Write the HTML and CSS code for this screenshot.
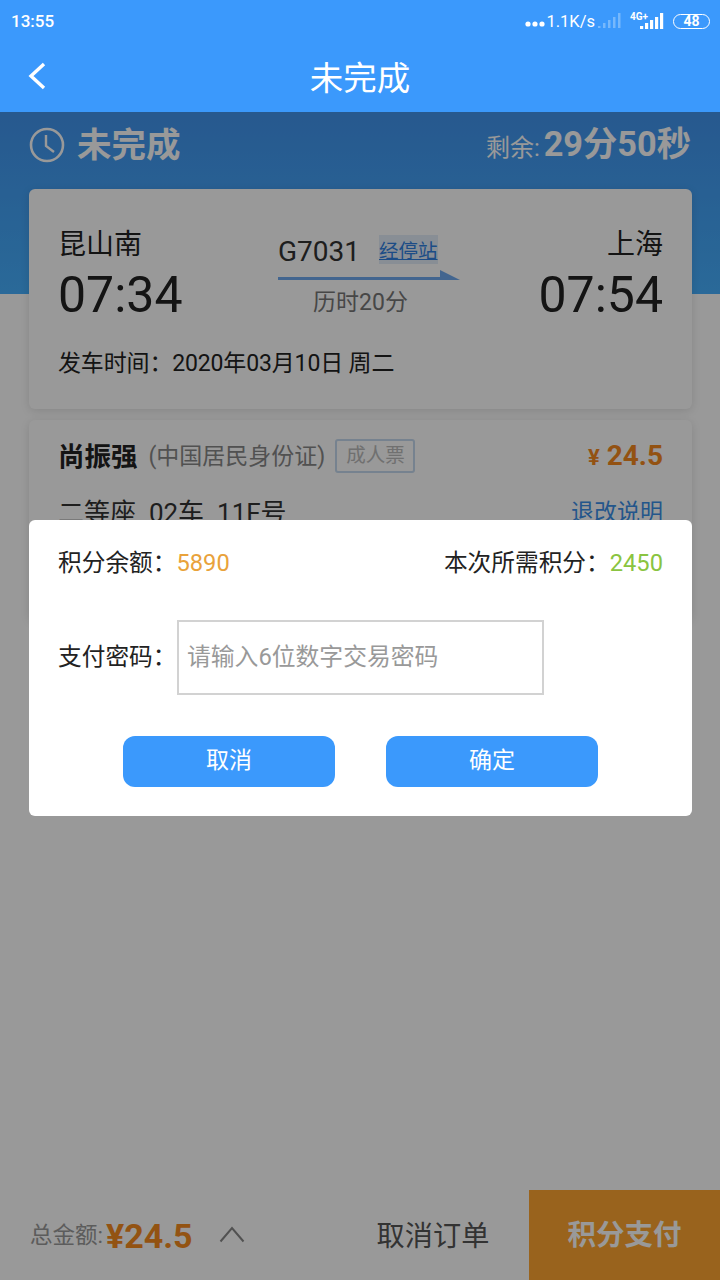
FILE: index.html
```html
<!DOCTYPE html>
<html lang="zh-CN">
<head>
    <meta charset="UTF-8">
    <meta name="viewport" content="width=device-width, initial-scale=1.0">
    <title>未完成</title>
    <link rel="stylesheet" href="styles.css">
</head>
<body>
<div class="page">
    <div class="top">
        <div class="status-bar">
            <span class="clock">13:55</span>
            <div class="status-icons">
                <svg class="dots" width="20" height="8" viewBox="0 0 20 8"><circle cx="3" cy="4" r="2.6"/><circle cx="10" cy="4" r="2.6"/><circle cx="17" cy="4" r="2.6"/></svg>
                <span class="speed">1.1K/s</span>
                <svg class="signal faint" width="24" height="16" viewBox="0 0 24 16"><rect x="0" y="13" width="2.5" height="2"/><rect x="5" y="10" width="2.5" height="5"/><rect x="10" y="7" width="2.5" height="8"/><rect x="15" y="4" width="2.5" height="11"/><rect x="20" y="0" width="2.5" height="15"/></svg>
                <span class="net">4G+</span>
                <svg class="signal" width="24" height="17" viewBox="0 0 24 17"><rect x="0" y="13" width="3.2" height="3"/><rect x="5" y="10" width="3.2" height="6"/><rect x="10" y="7" width="3.2" height="9"/><rect x="15" y="4" width="3.2" height="12"/><rect x="20" y="0" width="3.2" height="16"/></svg>
                <span class="battery">48</span>
            </div>
        </div>
        <div class="nav">
            <svg class="back" width="20" height="28" viewBox="0 0 20 28"><path d="M17 2 L4 14 L17 26" fill="none" stroke="#fff" stroke-width="3.4"/></svg>
            <span class="nav-title">未完成</span>
        </div>
    </div>

    <div class="hero">
        <div class="hero-state">
            <svg width="36" height="36" viewBox="0 0 36 36"><circle cx="18" cy="18" r="16" fill="none" stroke="#fff" stroke-width="2.6"/><path d="M17 8 V19 L25 25" fill="none" stroke="#fff" stroke-width="2.4"/></svg>
            <span class="hero-title">未完成</span>
        </div>
        <div class="hero-left"><span class="left-label">剩余:</span> <span class="left-time">29分50秒</span></div>
    </div>

    <div class="cards">
        <div class="card trip">
            <div class="trip-row">
                <div class="station">
                    <div class="station-name">昆山南</div>
                    <div class="station-time">07:34</div>
                </div>
                <div class="train">
                    <div class="train-top"><span class="train-no">G7031</span><a class="stops">经停站</a></div>
                    <svg class="arrow" width="182" height="12" viewBox="0 0 182 12"><rect x="0" y="7" width="176" height="3" fill="#6fa8ee"/><path d="M162 0 L182 10 L162 10 Z" fill="#6fa8ee"/></svg>
                    <div class="duration">历时20分</div>
                </div>
                <div class="station right">
                    <div class="station-name">上海</div>
                    <div class="station-time">07:54</div>
                </div>
            </div>
            <div class="depart">发车时间：2020年03月10日 周二</div>
        </div>

        <div class="card passenger">
            <div class="passenger-row">
                <span class="name">尚振强</span>
                <span class="id-type">(中国居民身份证)</span>
                <span class="tag">成人票</span>
                <span class="price"><small>¥</small>24.5</span>
            </div>
            <div class="passenger-row seat-row">
                <span class="seat">二等座&nbsp; 02车&nbsp; 11F号</span>
                <span class="refund">退改说明</span>
            </div>
        </div>
    </div>

    <div class="bottom-bar">
        <span class="total-label">总金额:</span>
        <span class="total">¥24.5</span>
        <svg class="chevron" width="26" height="18" viewBox="0 0 26 18"><path d="M1.5 16.5 L13 3 L24.5 16.5" fill="none" stroke="#888" stroke-width="2"/></svg>
        <span class="cancel-order">取消订单</span>
        <div class="pay">积分支付</div>
    </div>

    <div class="overlay">
        <div class="modal">
            <div class="modal-row">
                <div>积分余额：<span class="balance">5890</span></div>
                <div>本次所需积分：<span class="needed">2450</span></div>
            </div>
            <div class="pwd-row">
                <label for="pwd">支付密码：</label>
                <input id="pwd" type="text" placeholder="请输入6位数字交易密码">
            </div>
            <div class="modal-btns">
                <button>取消</button>
                <button>确定</button>
            </div>
        </div>
    </div>
</div>
</body>
</html>
```

FILE: styles.css
```css
* {
    box-sizing: border-box;
}

body {
    margin: 0;
    font-family: Roboto, "Noto Sans CJK SC", sans-serif;
    color: #222;
}

.page {
    position: relative;
    width: 720px;
    height: 1280px;
    background: #fff;
    display: flex;
    flex-flow: column;
    overflow: hidden;
}

/* header stays bright, it is not under the overlay */
.top {
    background: #3b99fc;
    color: #fff;
    height: 112px;
}

.status-bar {
    height: 44px;
    padding: 0 10px 2px 11px;
    display: flex;
    align-items: center;
    justify-content: space-between;
}

.clock {
    font-size: 17px;
    font-weight: 500;
}

.status-icons {
    display: flex;
    align-items: center;
}

.status-icons svg {
    fill: #fff;
}

.dots {
    margin: 6px 1px 0 0;
}

.speed {
    font-size: 16.5px;
}

.signal.faint {
    margin-left: 3px;
    opacity: .3;
}

.net {
    font-size: 10px;
    font-weight: 700;
    margin: -10px -8px 0 8px;
}

.battery {
    margin-left: 9px;
    width: 37px;
    height: 15px;
    border: 1.5px solid #fff;
    border-radius: 8px;
    font-size: 14px;
    font-weight: 700;
    line-height: 12px;
    text-align: center;
}

.nav {
    height: 68px;
    padding: 0 0 6px 27px;
    display: flex;
    align-items: center;
    position: relative;
}

.back {
    margin-top: 2px;
}

.nav-title {
    flex: 1;
    margin-right: 47px;
    text-align: center;
    font-size: 33.5px;
}

.hero {
    height: 182px;
    padding: 12px 29px 0;
    background: linear-gradient(#4194ee, #46b0ff);
    color: #fff;
    display: flex;
    align-items: flex-start;
    justify-content: space-between;
}

.hero-state {
    display: flex;
    align-items: center;
    gap: 12px;
    line-height: 42px;
}

.hero-title {
    font-size: 34.5px;
    font-weight: 700;
}

.left-label {
    font-size: 24px;
}

.left-time {
    font-size: 34.3px;
    font-weight: 700;
}

.hero-left {
    line-height: 40px;
}

.cards {
    margin-top: -105px;
    padding: 0 28px 0 29px;
}

.card {
    background: #fff;
    border-radius: 6px;
    box-shadow: 0 2px 10px rgba(0, 0, 0, .12);
    padding: 0 29px 0 29px;
}

.trip {
    height: 220px;
    padding-top: 36px;
}

.trip-row {
    display: flex;
    justify-content: space-between;
}

.station-name {
    font-size: 28px;
    line-height: 39px;
}

.station-time {
    font-size: 50px;
    line-height: 62px;
}

.right {
    text-align: right;
}

.train {
    margin: 7px 0 0 17px;
    width: 182px;
}

.train-top {
    display: flex;
    align-items: center;
    height: 38px;
}

.train-no {
    font-size: 28px;
    color: #333;
}

.stops {
    margin: -3px 0 0 19px;
    font-size: 19.5px;
    color: #2f7fe0;
    text-decoration: underline;
    background: #e3edf9;
}

.arrow {
    display: block;
}

.duration {
    margin: 3px 17px 0 0;
    text-align: center;
    font-size: 23px;
    line-height: 36px;
    color: #777;
}

.depart {
    margin: 21px 0 0 0;
    font-size: 23px;
    line-height: 34px;
    letter-spacing: -.15px;
}

.passenger {
    margin-top: 11px;
    height: 200px;
    padding-top: 15px;
    padding-left: 30px;
}

.passenger-row {
    display: flex;
    align-items: center;
    height: 38px;
}

.name {
    margin-left: -1px;
    font-size: 26.5px;
    font-weight: 700;
}

.id-type {
    margin-left: 11px;
    font-size: 23px;
    color: #888;
}

.tag {
    margin: 4px 0 0 10px;
    width: 80px;
    height: 34px;
    border: 2px solid #c5d9ee;
    border-radius: 3px;
    font-size: 19.5px;
    line-height: 30px;
    text-align: center;
    color: #bbb;
}

.price {
    margin: 3px 0 0 auto;
    font-size: 28px;
    font-weight: 700;
    color: #f5891e;
}

.price small {
    font-size: 22px;
    margin-right: 7px;
}

.seat-row {
    margin-top: 18px;
    justify-content: space-between;
}

.seat {
    margin-left: -1px;
    font-size: 26px;
    color: #333;
}

.refund {
    font-size: 23px;
    color: #3b8fe8;
}

.bottom-bar {
    margin-top: auto;
    height: 90px;
    padding-left: 30px;
    display: flex;
    align-items: center;
}

.total-label {
    margin-bottom: 4px;
    font-size: 22.5px;
    color: #999;
}

.total {
    margin: 2px 0 0 3px;
    font-size: 34px;
    font-weight: 700;
    color: #f58a1f;
}

.chevron {
    margin: 0 0 2px 26px;
}

.cancel-order {
    margin: 0 0 4px 132px;
    font-size: 28.2px;
    color: #555;
}

.pay {
    margin-left: auto;
    width: 191px;
    height: 90px;
    background: #ffa631;
    color: #fff;
    font-size: 28.5px;
    font-weight: 700;
    line-height: 92px;
    text-align: center;
}

.overlay {
    position: absolute;
    top: 112px;
    left: 0;
    right: 0;
    bottom: 0;
    background: rgba(0, 0, 0, .4);
    padding: 408px 28px 0 29px;
}

.modal {
    height: 296px;
    background: #fff;
    border-radius: 6px;
    padding: 26px 29px 0;
    font-size: 23.7px;
    color: #222;
}

.modal-row {
    display: flex;
    justify-content: space-between;
    line-height: 34px;
}

.balance {
    color: #e9a23b;
}

.needed {
    color: #8ac441;
}

.pwd-row {
    margin-top: 40px;
    display: flex;
    align-items: center;
}

.pwd-row label {
    width: 119px;
    flex-shrink: 0;
    margin-bottom: 5px;
    white-space: nowrap;
}

.pwd-row input {
    width: 367px;
    height: 75px;
    border: 2px solid #d2d2d2;
    padding: 0 8px 1px;
    font: inherit;
    font-size: 23.8px;
    outline: none;
}

.pwd-row input::placeholder {
    color: #999;
}

.modal-btns {
    margin-top: 41px;
    display: flex;
    justify-content: center;
    gap: 51px;
}

.modal-btns button {
    width: 212px;
    height: 51px;
    border: 0;
    border-radius: 12px;
    background: #3b99fc;
    color: #fff;
    font: inherit;
    font-size: 23px;
    padding-bottom: 9px;
}
```
